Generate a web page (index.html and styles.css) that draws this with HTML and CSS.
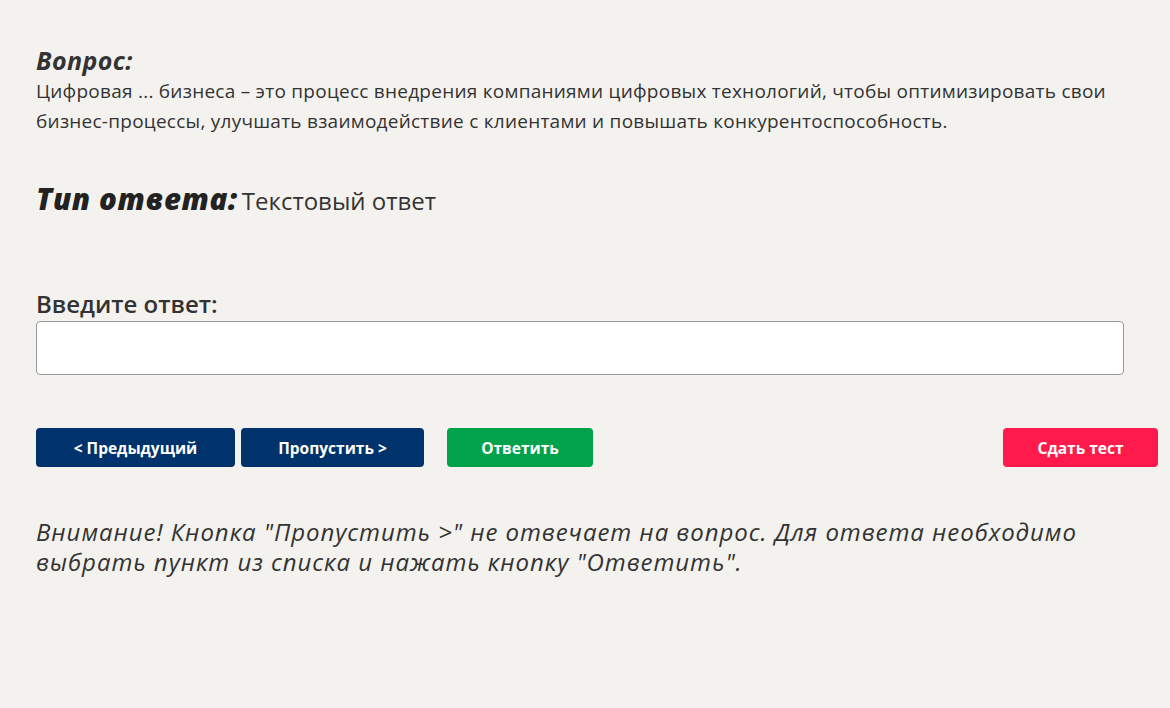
FILE: index.html
```html
<!DOCTYPE html>
<html lang="ru">
<head>
  <meta charset="utf-8">
  <title>Вопрос</title>
  <link rel="stylesheet" href="styles.css">
</head>
<body>
  <div class="container">
    <div class="question">
      <h3 class="q-title">Вопрос:</h3>
      <p class="q-text">Цифровая ... бизнеса – это процесс внедрения компаниями цифровых технологий, чтобы оптимизировать свои бизнес-процессы, улучшать взаимодействие с клиентами и повышать конкурентоспособность.</p>
    </div>

    <div class="answer-type">
      <span class="type-label">Тип ответа:</span> <span class="type-value">Текстовый ответ</span>
    </div>

    <div class="answer-box">
      <label class="answer-label" for="answer">Введите ответ:</label>
      <input type="text" id="answer" class="answer-input">
    </div>

    <div class="btn-row">
      <button class="button btn-nav">&lt; Предыдущий</button>
      <button class="button btn-nav btn-skip">Пропустить &gt;</button>
      <button class="button btn-answer">Ответить</button>
      <button class="button btn-finish">Сдать тест</button>
    </div>

    <p class="warning">Внимание! Кнопка "Пропустить &gt;" не отвечает на вопрос. Для ответа необходимо выбрать пункт из списка и нажать кнопку "Ответить".</p>
  </div>
</body>
</html>
```

FILE: styles.css
```css
body {
  margin: 0;
  background-color: #f3f2ef;
  color: #333;
  font-family: "Open Sans", "Noto Sans", sans-serif;
}
.container {
  width: 1088px;
  padding: 44px 0 0 36px;
}
.q-title {
  margin: 0;
  font-size: 25px;
  font-style: italic;
  font-weight: 700;
  letter-spacing: 0.4px;
  line-height: 32px;
}
.q-text {
  margin: 0;
  font-size: 19px;
  letter-spacing: 0.25px;
  line-height: 30px;
}
.answer-type {
  margin-top: 45px;
  line-height: 36px;
}
.type-label {
  font-size: 29.5px;
  font-style: italic;
  font-weight: 800;
  letter-spacing: 0.6px;
  color: #222;
}
.type-value {
  font-size: 24px;
}
.answer-box {
  margin-top: 67px;
}
.answer-label {
  display: block;
  font-size: 24px;
  font-weight: 600;
  line-height: 30px;
}
.answer-input {
  display: block;
  box-sizing: border-box;
  width: 100%;
  height: 54px;
  margin-top: 2px;
  border: 1px solid #999;
  border-radius: 4px;
  background: #fff;
}
.btn-row {
  display: flex;
  width: 1122px;
  margin-top: 53px;
}
.button {
  height: 39px;
  border: none;
  border-radius: 4px;
  color: #fff;
  font-family: "Open Sans", sans-serif;
  font-size: 15.5px;
  font-weight: 700;
  cursor: pointer;
}
.btn-nav {
  width: 199px;
  background-color: #00336b;
}
.btn-skip {
  width: 183px;
  margin-left: 6px;
}
.btn-answer {
  width: 146px;
  margin-left: 23px;
  background-color: #00a24b;
}
.btn-finish {
  width: 155px;
  margin-left: auto;
  background-color: #ff1a4c;
}
.warning {
  margin: 50px 0 0;
  font-size: 24px;
  font-style: italic;
  letter-spacing: 0.95px;
  line-height: 30px;
}
```
